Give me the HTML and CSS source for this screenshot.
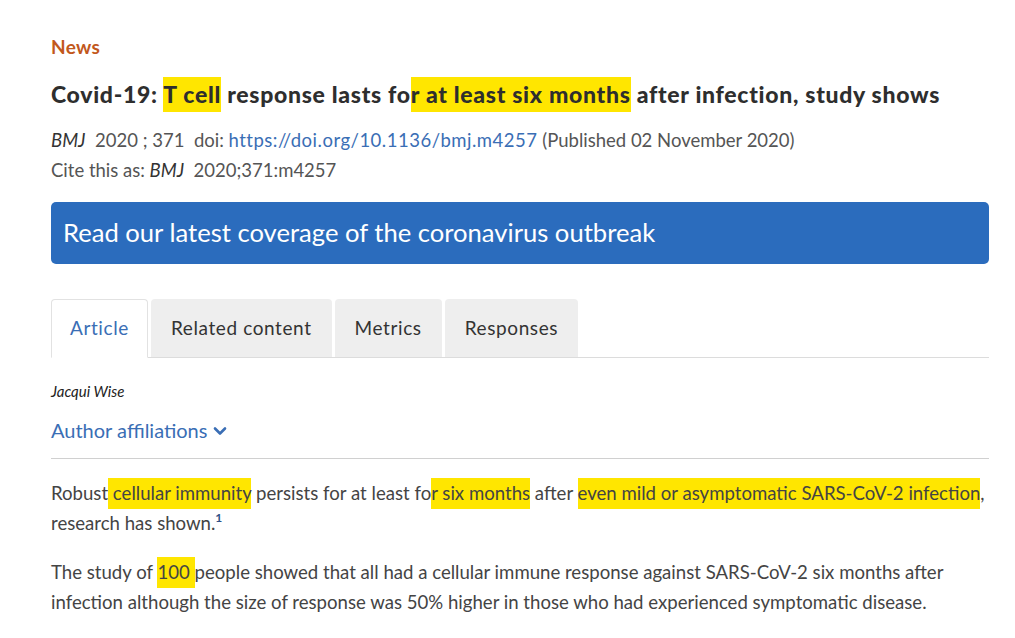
FILE: index.html
```html
<!DOCTYPE html>
<html>
<head>
<meta charset="utf-8">
<link rel="stylesheet" href="styles.css">
</head>
<body>
<main class="page">
  <div class="section-label">News</div>
  <h1 class="title">Covid-19: <span class="hl hl-title">T cell</span> response lasts fo<span class="hl hl-title">r at least six months</span> after infection, study shows</h1>
  <div class="meta">
    <div><em>BMJ</em>&nbsp; 2020 ; 371 &nbsp;doi: <a class="link" href="#">https://doi.org/10.1136/bmj.m4257</a> (Published 02 November 2020)</div>
    <div>Cite this as: <em>BMJ</em>&nbsp; 2020;371:m4257</div>
  </div>
  <div class="banner">Read our latest coverage of the coronavirus outbreak</div>
  <nav class="tabs">
    <div class="tab active">Article</div>
    <div class="tab">Related content</div>
    <div class="tab">Metrics</div>
    <div class="tab">Responses</div>
  </nav>
  <div class="author">Jacqui Wise</div>
  <div class="affil">Author affiliations
    <svg class="chev" width="14" height="10" viewBox="0 0 14 10"><path d="M2 2.5 L7 7.5 L12 2.5" fill="none" stroke="#3a6eb5" stroke-width="2.6" stroke-linecap="round" stroke-linejoin="round"/></svg>
  </div>
  <hr class="rule">
  <p class="para">Robust<span class="hl"> cellular immunity</span> persists for at least fo<span class="hl">r six months</span> after <span class="hl">even mild or asymptomatic SARS-CoV-2 infection</span>, research has shown.<sup class="ref">1</sup></p>
  <p class="para">The study of <span class="hl">100 </span>people showed that all had a cellular immune response against SARS-CoV-2 six months after infection although the size of response was 50% higher in those who had experienced symptomatic disease.</p>
</main>
</body>
</html>
```

FILE: styles.css
```css
html, body {
  margin: 0;
  padding: 0;
  background: #ffffff;
}

body {
  font-family: Lato, "Liberation Sans", sans-serif;
  color: #444;
}

.page {
  width: 938px;
  margin-left: 51px;
  padding-top: 35px;
}

.section-label {
  font-weight: 700;
  font-size: 19px;
  color: #c2581c;
  line-height: 24px;
  letter-spacing: 0.3px;
}

.title {
  margin: 20px 0 0 0;
  font-size: 23px;
  font-weight: 900;
  color: #2e2e2e;
  line-height: 30px;
  letter-spacing: 0.7px;
}

.hl {
  background: #ffe600;
}

.hl-title {
  box-shadow: 0 -3px 0 #ffe600, 0 4px 0 #ffe600;
}

.meta {
  margin-top: 16px;
  font-size: 18.5px;
  line-height: 30px;
  color: #555;
}

.meta em {
  color: #333;
}

.link {
  color: #3a6eb5;
  text-decoration: none;
  letter-spacing: 0.5px;
}

.banner {
  margin-top: 17px;
  height: 62px;
  box-sizing: border-box;
  background: #2b6cbd;
  border-radius: 5px;
  color: #fff;
  font-size: 25.6px;
  line-height: 60px;
  padding-left: 12px;
}

.tabs {
  margin-top: 35px;
  display: flex;
  gap: 3px;
  border-bottom: 1px solid #dcdcdc;
  height: 58px;
}

.tab {
  background: #eeeeee;
  border-radius: 4px 4px 0 0;
  font-size: 19px;
  letter-spacing: 0.6px;
  color: #333;
  line-height: 58px;
  padding: 0 20px;
  box-sizing: border-box;
  height: 58px;
}

.tab.active {
  background: #fff;
  color: #3a6eb5;
  border: 1px solid #e2e2e2;
  border-bottom: 1px solid #fff;
  height: 59px;
  line-height: 56px;
  padding: 0 18px;
}

.author {
  margin-top: 23px;
  font-style: italic;
  font-size: 15px;
  color: #222;
  line-height: 20px;
}

.affil {
  margin-top: 16px;
  color: #3a6eb5;
  font-size: 20px;
  line-height: 26px;
  display: flex;
  align-items: center;
  gap: 6px;
}

.chev {
  margin-top: 2px;
}

.rule {
  margin: 15px 0 0 0;
  border: 0;
  border-top: 1px solid #d0d0d0;
}

.para {
  margin: 19px 0 0 0;
  font-size: 18.6px;
  line-height: 30px;
  color: #444;
}

.para .hl {
  box-shadow: 0 -4px 0 #ffe600, 0 5px 0 #ffe600;
}

.para + .para {
  margin-top: 19px;
}

.ref {
  font-size: 12px;
  color: #2e4f86;
  font-weight: 700;
  vertical-align: top;
  line-height: 20px;
}
```
